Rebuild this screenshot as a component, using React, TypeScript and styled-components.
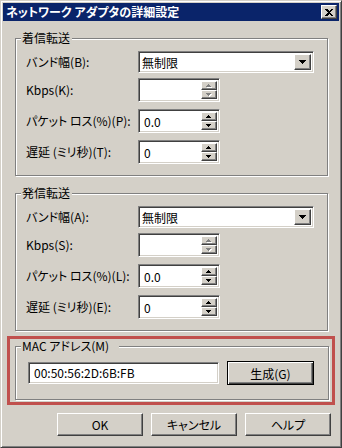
import React from "react";
import styled, { createGlobalStyle, css } from "styled-components";

const FACE = "#d4d0c8";
const SHADOW = "#808080";
const DARK = "#404040";

const GlobalStyle = createGlobalStyle`
  html, body {
    margin: 0;
    padding: 0;
    background: ${FACE};
  }
  body {
    font-family: "Noto Sans CJK JP", "Liberation Sans", sans-serif;
    font-size: 12px;
    font-feature-settings: "palt";
    color: #000;
  }
`;

const raised = css`
  box-sizing: border-box;
  border: 1px solid;
  border-color: #fff ${DARK} ${DARK} #fff;
  box-shadow: inset -1px -1px ${SHADOW};
  background: ${FACE};
`;

const sunken = css`
  box-sizing: border-box;
  border: 1px solid;
  border-color: ${SHADOW} #fff #fff ${SHADOW};
  box-shadow: inset 1px 1px ${DARK}, inset -1px -1px ${FACE};
  background: #fff;
`;

const Window = styled.div`
  box-sizing: border-box;
  width: 342px;
  height: 448px;
  padding: 2px;
  background: ${FACE};
  border: 1px solid;
  border-color: ${FACE} ${DARK} ${DARK} ${FACE};
  box-shadow: inset 1px 1px #fff, inset -1px -1px ${SHADOW};
  display: flex;
  flex-direction: column;
`;

const TitleBar = styled.div`
  height: 18px;
  flex-shrink: 0;
  background: #0a246a;
  display: flex;
  align-items: center;
  justify-content: space-between;
  padding: 0 2px 0 3px;
`;

const Title = styled.span`
  color: #fff;
  font-weight: bold;
  font-size: 12px;
  line-height: 18px;
  white-space: nowrap;
`;

const CloseButton = styled.div`
  ${raised};
  width: 16px;
  height: 14px;
  display: flex;
  align-items: center;
  justify-content: center;
`;

const Body = styled.div`
  padding: 0 11px 0 12px;
  display: flex;
  flex-direction: column;
`;

const Group = styled.fieldset<{ $top: number }>`
  margin: ${(p) => p.$top}px 0 0;
  padding: 0;
  min-width: 0;
  border: 1px solid ${SHADOW};
  box-shadow: inset 1px 1px #fff, 1px 1px #fff;
`;

const Legend = styled.legend<{ $trail?: number }>`
  margin-left: 5px;
  padding: 0 ${(p) => p.$trail ?? 2}px 0 1px;
  line-height: 14px;
  font-size: 12px;
  background: ${FACE};
`;

const GroupBody = styled.div<{ $pt: number; $pb: number }>`
  padding: ${(p) => p.$pt}px 0 ${(p) => p.$pb}px 10px;
  display: flex;
  flex-direction: column;
`;

const Row = styled.div<{ $top: number }>`
  display: flex;
  align-items: center;
  margin-top: ${(p) => p.$top}px;
`;

const Label = styled.span`
  width: 112px;
  flex-shrink: 0;
  white-space: nowrap;
  line-height: 14px;
`;

const Combo = styled.div`
  ${sunken};
  width: 176px;
  height: 22px;
  padding: 2px;
  display: flex;
`;

const ComboText = styled.span`
  flex: 1;
  padding-left: 1px;
  line-height: 18px;
`;

const DropButton = styled.div`
  ${raised};
  width: 17px;
  display: flex;
  align-items: center;
  justify-content: center;
`;

const Spin = styled.div`
  ${sunken};
  width: 82px;
  height: 24px;
  padding: 2px;
  display: flex;
`;

const SpinText = styled.span`
  flex: 1;
  padding-left: 3px;
  line-height: 20px;
`;

const SpinButtons = styled.div`
  width: 16px;
  display: flex;
  flex-direction: column;
`;

const SpinButton = styled.div`
  ${raised};
  flex: 1;
  display: flex;
  align-items: center;
  justify-content: center;
`;

const RedFrame = styled.div`
  margin: 5px -7px 0 -8px;
  border: 3px solid #c0504d;
  padding: 0 3px 2px 5px;
`;

const MacRow = styled.div`
  display: flex;
  align-items: center;
  gap: 8px;
  padding: 8px 0 14px 12px;
`;

const MacField = styled.div`
  ${sunken};
  width: 191px;
  height: 22px;
  padding: 0 5px;
  line-height: 20px;
`;

const DefaultButton = styled.div`
  box-sizing: border-box;
  width: 87px;
  height: 24px;
  border: 1px solid #000;
  box-shadow: inset 1px 1px #fff, inset -1px -1px ${DARK}, inset -2px -2px ${SHADOW};
  background: ${FACE};
  display: flex;
  align-items: center;
  justify-content: center;
`;

const ButtonRow = styled.div`
  display: flex;
  justify-content: flex-end;
  gap: 8px;
  margin-top: 8px;
  padding-right: 8px;
`;

const Button = styled.div`
  ${raised};
  width: 86px;
  height: 23px;
  display: flex;
  align-items: center;
  justify-content: center;
`;

const Arrow = ({ up, disabled, wide }: { up?: boolean; disabled?: boolean; wide?: boolean }) => {
  const w = wide ? 7 : 5;
  const h = wide ? 4 : 3;
  const pts = up ? `0,${h} ${w},${h} ${w / 2},0` : `0,0 ${w},0 ${w / 2},${h}`;
  return (
    <svg width={w + 1} height={h + 1} viewBox={`0 0 ${w + 1} ${h + 1}`} shapeRendering="crispEdges">
      {disabled && <polygon points={pts} fill="#fff" transform="translate(1,1)" />}
      <polygon points={pts} fill={disabled ? SHADOW : "#000"} />
    </svg>
  );
};

const Spinner = ({ value, disabled }: { value?: string; disabled?: boolean }) => (
  <Spin>
    <SpinText>{value}</SpinText>
    <SpinButtons>
      <SpinButton>
        <Arrow up disabled={disabled} />
      </SpinButton>
      <SpinButton>
        <Arrow disabled={disabled} />
      </SpinButton>
    </SpinButtons>
  </Spin>
);

const Transfer = ({ title, keys, top }: { title: string; keys: string[]; top: number }) => (
  <Group $top={top}>
    <Legend>{title}</Legend>
    <GroupBody $pt={6} $pb={11}>
      <Row $top={0}>
        <Label>バンド幅({keys[0]}):</Label>
        <Combo>
          <ComboText>無制限</ComboText>
          <DropButton>
            <Arrow wide />
          </DropButton>
        </Combo>
      </Row>
      <Row $top={5}>
        <Label>Kbps({keys[1]}):</Label>
        <Spinner disabled />
      </Row>
      <Row $top={7}>
        <Label>パケット ロス(%)({keys[2]}):</Label>
        <Spinner value="0.0" />
      </Row>
      <Row $top={7}>
        <Label>遅延 (ミリ秒)({keys[3]}):</Label>
        <Spinner value="0" />
      </Row>
    </GroupBody>
  </Group>
);

export default function App() {
  return (
    <>
      <GlobalStyle />
      <Window>
        <TitleBar>
          <Title>ネットワーク アダプタの詳細設定</Title>
          <CloseButton>
            <svg width="8" height="7" viewBox="0 0 8 7" shapeRendering="crispEdges">
              <path d="M0 0h2l2 2 2-2h2v1l-3 2.5 3 2.5v1h-2l-2-2-2 2h-2v-1l3-2.5-3-2.5z" fill="#000" />
            </svg>
          </CloseButton>
        </TitleBar>
        <Body>
          <Transfer title="着信転送" keys={["B", "K", "P", "T"]} top={10} />
          <Transfer title="発信転送" keys={["A", "S", "L", "E"]} top={10} />
          <RedFrame>
            <Group $top={0}>
              <Legend $trail={10}>MAC アドレス(M)</Legend>
              <MacRow>
                <MacField>00:50:56:2D:6B:FB</MacField>
                <DefaultButton>生成(G)</DefaultButton>
              </MacRow>
            </Group>
          </RedFrame>
        </Body>
        <ButtonRow>
          <Button>OK</Button>
          <Button>キャンセル</Button>
          <Button>ヘルプ</Button>
        </ButtonRow>
      </Window>
    </>
  );
}
